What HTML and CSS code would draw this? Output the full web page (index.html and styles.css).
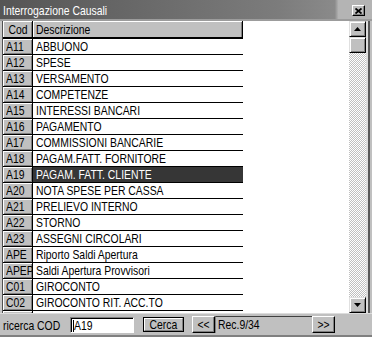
FILE: index.html
```html
<!DOCTYPE html>
<html>
<head>
<meta charset="utf-8">
<link rel="stylesheet" href="styles.css">
</head>
<body>
<div class="window">
  <div class="titlebar">
    <span class="title"><span class="t">Interrogazione Causali</span></span>
    <div class="close">
      <svg width="7" height="6" viewBox="0 0 7 6"><path d="M0.5 0.5 L6.5 5.5 M6.5 0.5 L0.5 5.5" stroke="#000" stroke-width="1.8" fill="none"/></svg>
    </div>
  </div>
  <div class="sep"></div>
  <div class="main">
    <div class="leftedge"></div>
    <div class="grid">
      <div class="table">
        <div class="hdr">
          <div class="h-cod"><span class="t tc">Cod</span></div>
          <div class="h-desc"><span class="t">Descrizione</span></div>
        </div>
        <div class="row"><div class="cod"><span class="t">A11</span></div><div class="desc"><span class="t">ABBUONO</span></div></div>
        <div class="row"><div class="cod"><span class="t">A12</span></div><div class="desc"><span class="t">SPESE</span></div></div>
        <div class="row"><div class="cod"><span class="t">A13</span></div><div class="desc"><span class="t">VERSAMENTO</span></div></div>
        <div class="row"><div class="cod"><span class="t">A14</span></div><div class="desc"><span class="t">COMPETENZE</span></div></div>
        <div class="row"><div class="cod"><span class="t">A15</span></div><div class="desc"><span class="t">INTERESSI BANCARI</span></div></div>
        <div class="row"><div class="cod"><span class="t">A16</span></div><div class="desc"><span class="t">PAGAMENTO</span></div></div>
        <div class="row"><div class="cod"><span class="t">A17</span></div><div class="desc"><span class="t">COMMISSIONI BANCARIE</span></div></div>
        <div class="row"><div class="cod"><span class="t">A18</span></div><div class="desc"><span class="t">PAGAM.FATT. FORNITORE</span></div></div>
        <div class="row selected"><div class="cod"><span class="t">A19</span></div><div class="desc"><span class="t">PAGAM. FATT. CLIENTE</span></div></div>
        <div class="row"><div class="cod"><span class="t">A20</span></div><div class="desc"><span class="t">NOTA SPESE PER CASSA</span></div></div>
        <div class="row"><div class="cod"><span class="t">A21</span></div><div class="desc"><span class="t">PRELIEVO INTERNO</span></div></div>
        <div class="row"><div class="cod"><span class="t">A22</span></div><div class="desc"><span class="t">STORNO</span></div></div>
        <div class="row"><div class="cod"><span class="t">A23</span></div><div class="desc"><span class="t">ASSEGNI CIRCOLARI</span></div></div>
        <div class="row"><div class="cod"><span class="t">APE</span></div><div class="desc"><span class="t">Riporto Saldi Apertura</span></div></div>
        <div class="row"><div class="cod"><span class="t">APEP</span></div><div class="desc"><span class="t">Saldi Apertura Provvisori</span></div></div>
        <div class="row"><div class="cod"><span class="t">C01</span></div><div class="desc"><span class="t">GIROCONTO</span></div></div>
        <div class="row"><div class="cod"><span class="t">C02</span></div><div class="desc"><span class="t">GIROCONTO RIT. ACC.TO</span></div></div>
        <div class="row"><div class="cod"></div><div class="desc"></div></div>
      </div>
      <div class="scroll">
        <div class="sbtn"><svg width="7" height="4" viewBox="0 0 7 4"><polygon points="3.5,0 7,4 0,4" fill="#000"/></svg></div>
        <div class="thumb"></div>
        <div class="track"></div>
        <div class="sbtn"><svg width="7" height="4" viewBox="0 0 7 4"><polygon points="0,0 7,0 3.5,4" fill="#000"/></svg></div>
      </div>
    </div>
    <div class="rightedge"></div>
  </div>
  <div class="footer">
    <span class="label"><span class="t">ricerca COD</span></span>
    <div class="input"><span class="caret"></span><span class="t">A19</span></div>
    <div class="btn-default"><div class="btn-in"><span class="t">Cerca</span></div></div>
    <div class="nav">
      <div class="navbtn"><span class="t">&lt;&lt;</span></div>
      <div class="rec"><span class="t">Rec.9/34</span></div>
      <div class="navbtn"><span class="t">&gt;&gt;</span></div>
    </div>
  </div>
</div>
</body>
</html>
```

FILE: styles.css
```css
* { box-sizing: border-box; margin: 0; padding: 0; }
html, body { width: 372px; height: 337px; overflow: hidden; }
body {
  background: #c0c0c0;
  font-family: "Liberation Sans", Arial, sans-serif;
  font-size: 13px;
  color: #000;
}
.t {
  display: inline-block;
  white-space: nowrap;
  transform: scaleX(0.8);
  transform-origin: 0 50%;
}
.tc { transform-origin: 50% 50%; }

.window { width: 372px; height: 337px; display: flex; flex-direction: column; }

.titlebar {
  height: 19px;
  flex: none;
  display: flex;
  align-items: flex-start;
  background: linear-gradient(to right, #555 0%, #6a6a6a 40%, #7c7c7c 75%, #8a8a8a 90%, #b4b4b4 91%, #b4b4b4 100%);
  color: #fff;
}
.title { flex: 1; padding-left: 3px; line-height: 19px; padding-top: 1px; }
.close {
  width: 13px; height: 11px;
  margin-top: 5px; margin-right: 7px;
  background: #c0c0c0;
  border-top: 1px solid #fff; border-left: 1px solid #fff;
  border-right: 1px solid #000; border-bottom: 1px solid #000;
  box-shadow: inset -1px -1px #808080;
  display: flex; align-items: center; justify-content: center;
}
.close svg { display: block; }

.sep { height: 2px; flex: none; background: #9c9c9c; }

.main { height: 292px; flex: none; display: flex; }
.leftedge { width: 3px; flex: none; background: #c8c8c8; border-right: 1px solid #505050; }
.grid { flex: 1; display: flex; background: #fff; }
.table { width: 240px; flex: none; overflow: hidden; }

.hdr { display: flex; height: 18px; border-bottom: 2px solid #000; }
.h-cod, .h-desc {
  height: 16px;
  background: #c0c0c0;
  border-right: 1px solid #000;
  box-shadow: inset 1px 1px #fff, inset -1px 0 #808080;
  line-height: 17px;
  white-space: nowrap;
}
.h-cod { width: 30px; text-align: center; }
.h-desc { width: 210px; padding-left: 3px; }

.row { display: flex; height: 16px; }
.cod {
  width: 30px; height: 16px;
  background: #c0c0c0;
  border-right: 1px solid #000;
  border-bottom: 1px solid #000;
  box-shadow: inset 1px 1px #fff, inset -1px -1px #808080;
  padding-left: 3px;
  line-height: 16px;
  overflow: hidden;
}
.desc {
  width: 210px; height: 16px;
  border-bottom: 1px solid #000;
  padding-left: 3px;
  line-height: 16px;
  overflow: hidden;
}
.selected .desc { background: #363636; color: #fff; }

.scroll {
  width: 17px; margin-left: auto;
  display: flex; flex-direction: column;
}
.sbtn, .thumb {
  width: 17px; height: 16px; flex: none;
  background: #c0c0c0;
  border-top: 1px solid #e0e0e0; border-left: 1px solid #e0e0e0;
  border-right: 1px solid #000; border-bottom: 1px solid #000;
  box-shadow: inset 1px 1px #fff, inset -1px -1px #808080;
  display: flex; align-items: center; justify-content: center;
}
.sbtn svg { display: block; }
.track {
  flex: 1;
  background-color: #fff;
  background-image: conic-gradient(#c0c0c0 25%, #fff 0 50%, #c0c0c0 0 75%, #fff 0);
  background-size: 2px 2px;
}
.rightedge {
  width: 6px; flex: none;
  border-left: 2px solid #dcdcdc;
  background: #c0c0c0;
  box-shadow: inset 2px 0 #585858;
}

.footer {
  flex: 1;
  display: flex;
  align-items: center;
  padding-left: 3px;
  border-top: 1px solid #dcdcdc;
  border-bottom: 2px solid #808080;
}
.label { width: 67px; padding-top: 1px; }
.input {
  width: 64px; height: 16px;
  background: #fff;
  border-top: 1px solid #808080; border-left: 1px solid #808080;
  border-right: 1px solid #fff; border-bottom: 1px solid #fff;
  box-shadow: inset 1px 1px #000;
  padding-left: 2px;
  line-height: 15px;
  position: relative;
  display: flex;
}
.caret { width: 1px; height: 12px; background: #000; margin-top: 2px; margin-right: 0; }
.input .t { margin-left: 0; }
.btn-default {
  margin-left: 9px;
  width: 41px; height: 15px;
  border: 1px solid #000;
  background: #c0c0c0;
}
.btn-in {
  height: 100%;
  border-top: 1px solid #fff; border-left: 1px solid #fff;
  border-right: 1px solid #808080; border-bottom: 1px solid #808080;
  text-align: center;
  line-height: 12px;
  white-space: nowrap;
}
.btn-in .t { transform-origin: 50% 50%; }
.nav { display: flex; margin-left: 8px; height: 17px; }
.navbtn {
  width: 23px; height: 17px;
  background: #c0c0c0;
  border-top: 1px solid #fff; border-left: 1px solid #fff;
  border-right: 1px solid #000; border-bottom: 1px solid #000;
  box-shadow: inset -1px -1px #808080;
  text-align: center;
  line-height: 15px;
  white-space: nowrap;
}
.navbtn .t { transform-origin: 50% 50%; }
.rec {
  width: 97px; height: 17px;
  background: #c0c0c0;
  border-top: 1px solid #404040;
  border-left: 1px solid #808080;
  padding-left: 2px;
  line-height: 15px;
  white-space: nowrap;
}
```
